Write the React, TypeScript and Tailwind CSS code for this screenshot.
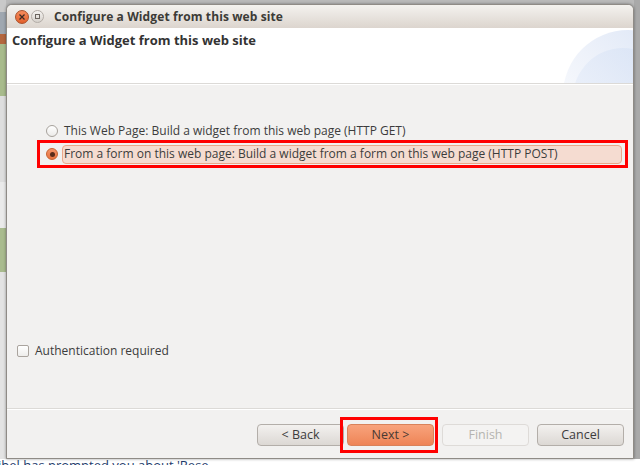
import React from "react"

const font = { fontFamily: '"Open Sans", "DejaVu Sans", sans-serif' }

function Button({ label, variant }: { label: string; variant?: "primary" | "disabled" }) {
    const base = "h-[22px] flex items-center justify-center rounded-[4px] border text-[12.5px]"
    if (variant === "primary") {
        return (
            <div className={`${base} w-[87px] border-[#d9825a] bg-gradient-to-b from-[#f8a37c] to-[#ee8456] text-[#4a3a33]`}>
                {label}
            </div>
        )
    }
    if (variant === "disabled") {
        return (
            <div className={`${base} w-[87px] border-[#dedbd8] bg-[#f4f3f2] text-[#b5b3b0]`}>
                {label}
            </div>
        )
    }
    return (
        <div className={`${base} w-[87px] border-[#b3aea9] bg-gradient-to-b from-[#f3f1ef] to-[#dcd8d4] text-[#3c3c3c]`}>
            {label}
        </div>
    )
}

export default function App() {
    return (
        <div className="relative w-[640px] h-[465px] overflow-hidden bg-[#b9b9b9]" style={font}>
            {/* background app peeking out */}
            <div className="absolute left-0 top-0 w-[6px] h-[465px] flex flex-col">
                <div className="h-[12px] bg-[#c9c9c9]" />
                <div className="h-[22px] bg-[#9fa7b0]" />
                <div className="h-[10px] bg-[#b4673f]" />
                <div className="h-[52px] bg-[#a8bb8c]" />
                <div className="h-[86px] bg-[#dedede]" />
                <div className="h-[46px] bg-[#eaeaea]" />
                <div className="h-[44px] bg-[#a9bb8e]" />
                <div className="flex-1 bg-[#e3e3e3]" />
            </div>
            <div className="absolute left-0 right-0 top-[459px] h-[6px] bg-white overflow-hidden">
                <div className="text-[13px] leading-none text-[#1d3b6b] -ml-[2px]">ibel has prompted you about 'Rese</div>
            </div>
            <div className="absolute right-0 top-0 w-[6px] h-[459px] bg-[#a9a9a9]" />

            {/* dialog window */}
            <div className="absolute left-[6px] top-[4px] w-[628px] h-[455px] flex flex-col rounded-t-[6px] overflow-hidden border border-[#8f8b86] shadow-[0_0_3px_rgba(0,0,0,0.4)] bg-[#f2f1f0]">
                {/* title bar */}
                <div className="h-[23px] flex items-center bg-gradient-to-b from-[#f4f2ef] to-[#dcd5ce] shrink-0">
                    <div className="ml-[8px] w-[14px] h-[14px] rounded-full bg-gradient-to-b from-[#f68c5c] to-[#e25f2a] border border-[#a9502b] flex items-center justify-center">
                        <svg width="6" height="6" viewBox="0 0 6 6">
                            <path d="M0.5 0.5 L5.5 5.5 M5.5 0.5 L0.5 5.5" stroke="#3a2a22" strokeWidth="1.2" />
                        </svg>
                    </div>
                    <div className="ml-[2px] w-[13px] h-[13px] rounded-full bg-gradient-to-b from-[#f5f3f1] to-[#d6d1cb] border border-[#b2aca6] flex items-center justify-center">
                        <div className="w-[5px] h-[5px] border border-[#6b655f]" />
                    </div>
                    <div className="ml-[10px] text-[12px] font-bold text-[#3c3b37] tracking-[0.1px]">
                        Configure a Widget from this web site
                    </div>
                </div>

                {/* header */}
                <div className="relative h-[55px] bg-white shrink-0 overflow-hidden">
                    <div className="absolute right-[-60px] top-[2px] w-[130px] h-[130px] rounded-full bg-gradient-to-bl from-[#d9e3f5] via-[#eef2fa] to-white" />
                    <div className="absolute right-[-40px] top-[20px] w-[100px] h-[100px] rounded-full bg-gradient-to-bl from-[#d3dff4] to-[#eef3fb] opacity-70" />
                    <div className="relative pl-[5px] pt-[3px] text-[13px] font-bold text-[#333333]">
                        Configure a Widget from this web site
                    </div>
                </div>
                <div className="h-[1px] bg-[#dcdad7] shrink-0" />
                <div className="h-[1px] bg-white shrink-0" />

                {/* body */}
                <div className="flex-1 flex flex-col text-[12px] text-[#3c3c3c]">
                    <div className="pt-[36px] pl-[30px] pr-[5px]">
                        <div className="flex items-center h-[19px] pl-[9px]">
                            <div className="w-[12px] h-[12px] rounded-full border border-[#a7a29c] bg-gradient-to-b from-white to-[#ecebe9]" />
                            <span className="ml-[6px]">This Web Page: Build a widget from this web page (HTTP GET)</span>
                        </div>
                        <div className="border-[3px] border-[#ff0000] h-[28px] flex items-center pl-[6px] pr-[3px]">
                            <div className="w-[12px] h-[12px] rounded-full border border-[#c8622f] bg-gradient-to-b from-[#f49468] to-[#e8733f] flex items-center justify-center">
                                <div className="w-[5px] h-[5px] rounded-full bg-[#5a2c1a]" />
                            </div>
                            <div className="ml-[4px] flex-1 h-[19px] rounded-[4px] border border-[#eba78a] bg-[#f5dcd1] flex items-center pl-[1px]">
                                From a form on this web page: Build a widget from a form on this web page (HTTP POST)
                            </div>
                        </div>
                    </div>

                    <div className="flex-1" />

                    <div className="flex items-center pl-[10px] mb-[48px]">
                        <div className="w-[12px] h-[12px] rounded-[2px] border border-[#aaa49e] bg-gradient-to-b from-white to-[#eeedeb]" />
                        <span className="ml-[6px]">Authentication required</span>
                    </div>

                    <div className="h-[1px] bg-[#dcdad7]" />
                    <div className="h-[1px] bg-white" />

                    <div className="h-[48px] flex items-start pt-[7px] justify-end pr-[9px]">
                        <div className="mt-[7px]">
                            <Button label="< Back" />
                        </div>
                        <div className="-ml-[4px] border-[3px] border-[#ff0000] pl-[4px] pr-[1px] pt-[4px] pb-[4px]">
                            <Button label="Next >" variant="primary" />
                        </div>
                        <div className="ml-[4px] mt-[7px]">
                            <Button label="Finish" variant="disabled" />
                        </div>
                        <div className="ml-[8px] mt-[7px]">
                            <Button label="Cancel" />
                        </div>
                    </div>
                </div>
            </div>
        </div>
    )
}
